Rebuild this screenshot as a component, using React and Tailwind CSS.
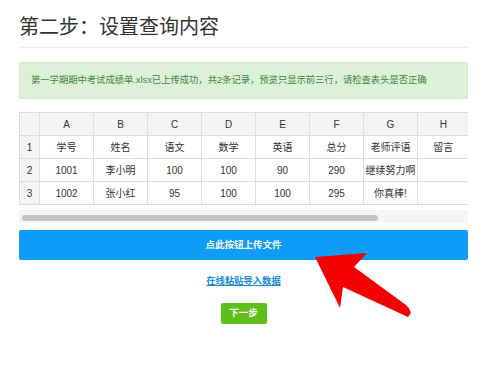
import React from "react";

const cols = ["A", "B", "C", "D", "E", "F", "G", "H"];
const rows = [
	["学号", "姓名", "语文", "数学", "英语", "总分", "老师评语", "留言"],
	["1001", "李小明", "100", "100", "90", "290", "继续努力啊", ""],
	["1002", "张小红", "95", "100", "100", "295", "你真棒!", ""],
];

const font = { fontFamily: '"Liberation Sans", "Noto Sans CJK SC", sans-serif' };

const PreviewTable = () => (
	<div className="mt-[13px] w-[449px] overflow-hidden">
		<table className="border-collapse text-[10px] text-[#333] w-[449px] table-fixed">
			<colgroup>
				<col className="w-[20px]" />
				{cols.map((c, i) => (
					<col key={c} className={i === cols.length - 1 ? "w-[51px]" : "w-[54px]"} />
				))}
			</colgroup>
			<thead>
				<tr className="h-[23px] bg-[#f3f3f3]">
					<th className="border border-[#dcdcdc]" />
					{cols.map((c, i) => (
						<th
							key={c}
							className={`border border-[#dcdcdc] font-normal ${i === cols.length - 1 ? "border-r-0" : ""}`}
						>
							{c}
						</th>
					))}
				</tr>
			</thead>
			<tbody>
				{rows.map((r, i) => (
					<tr key={i} className="h-[23px]">
						<td className="border border-[#dcdcdc] bg-[#f3f3f3] text-center">{i + 1}</td>
						{r.map((v, j) => (
							<td
								key={j}
								className={`border border-[#dcdcdc] text-center whitespace-nowrap ${j === r.length - 1 ? "border-r-0" : ""}`}
							>
								{v}
							</td>
						))}
					</tr>
				))}
			</tbody>
		</table>
	</div>
);

export default function App() {
	return (
		<div className="relative w-[500px] h-[369px] bg-white overflow-hidden" style={font}>
			<div className="w-[449px] ml-[19px] pt-[13px]">
				{/* title */}
				<div className="pb-[6px] border-b border-[#eeeeee]">
					<h1 className="text-[20px] leading-[28px] font-normal text-[#333]">第二步：设置查询内容</h1>
				</div>

				{/* upload result */}
				<div className="mt-[14px] h-[37px] flex items-center px-[11px] bg-[#dff0d8] border border-[#d6e9c6] rounded-[2px] text-[9.3px] text-[#3c853d]">
					第一学期期中考试成绩单.xlsx已上传成功，共2条记录，预览只显示前三行，请检查表头是否正确
				</div>

				<PreviewTable />

				{/* fake horizontal scrollbar */}
				<div className="mt-[5px] h-[13px] bg-[#f5f5f5] pt-[5px] px-[3px]">
					<div className="h-[6px] w-[356px] rounded-full bg-[#c2c2c2]" />
				</div>

				<button className="mt-[7px] w-full h-[30px] bg-[#0f9bf8] rounded-[2px] text-white text-[9.5px] font-bold">
					点此按钮上传文件
				</button>

				<div className="mt-[14px] flex justify-center">
					<a className="text-[9.3px] font-bold text-[#1a8adb] underline leading-[14px]">在线粘贴导入数据</a>
				</div>

				<div className="mt-[15px] flex justify-center">
					<button className="w-[46px] h-[21px] bg-[#60c01a] rounded-[2px] text-white text-[9.5px] font-bold">
						下一步
					</button>
				</div>
			</div>

			{/* red arrow annotation */}
			<svg className="absolute left-0 top-0 pointer-events-none" width="500" height="369" viewBox="0 0 500 369">
				<path d="M315 257 L367 253 L354 267 L406 305 Q414 312 408 317 L343 287 L340 308 Z" fill="#f50000" />
			</svg>
		</div>
	);
}
